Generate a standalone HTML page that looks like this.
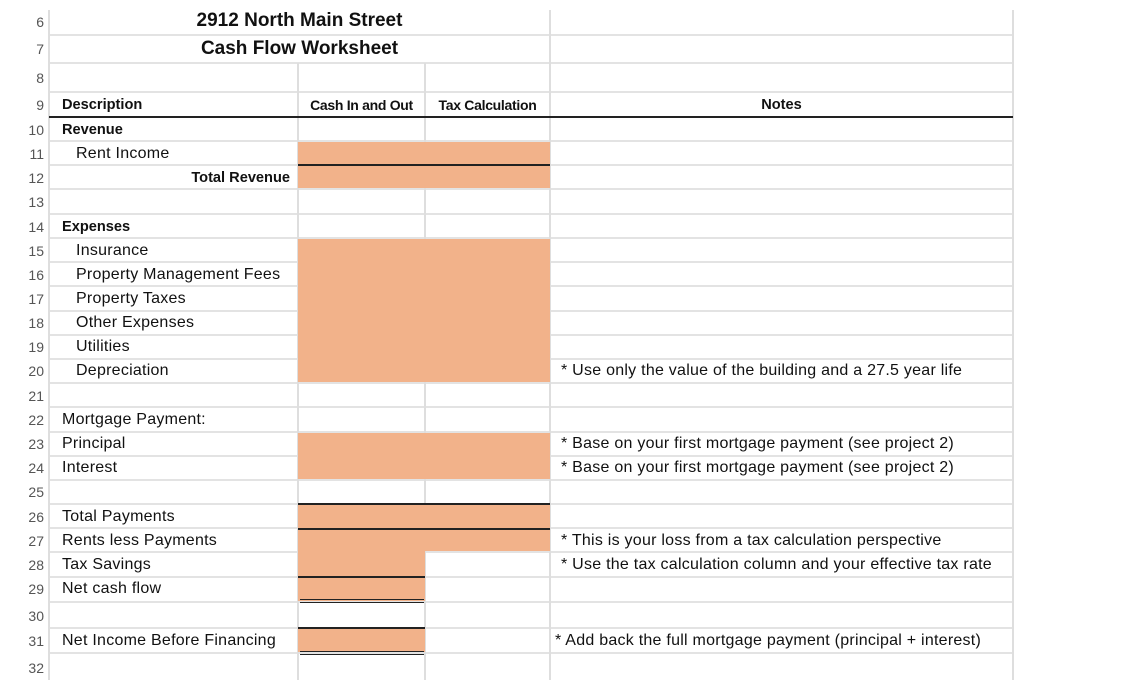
<!DOCTYPE html>
<html><head><meta charset="utf-8"><style>
body{margin:0;width:1147px;height:697px;background:#fff;position:relative;overflow:hidden;font-family:"Liberation Sans",sans-serif;color:#111}
div{position:absolute;box-sizing:border-box}
.h{left:49px;width:964px;height:2px;background:#e3e3e3}
.v{width:2px;background:#dedede}
.o{background:#f2b28a}
.k{background:#222;height:1.5px}
.n{left:0;width:44px;text-align:right;font-size:14px;color:#555;line-height:24px}
.t{font-size:16px;letter-spacing:0.25px;line-height:24px;white-space:nowrap}
.b{font-weight:bold;font-size:14.6px;letter-spacing:0}
</style></head><body>
<div class="o" style="left:298px;top:141px;width:252px;height:48px"></div>
<div class="o" style="left:298px;top:238px;width:252px;height:145px"></div>
<div class="o" style="left:298px;top:432px;width:252px;height:48px"></div>
<div class="o" style="left:298px;top:504px;width:252px;height:48px"></div>
<div class="o" style="left:298px;top:552px;width:127px;height:49px"></div>
<div class="o" style="left:298px;top:628px;width:127px;height:25px"></div>
<div class="h" style="top:34px"></div><div class="h" style="top:62px"></div><div class="h" style="top:91px"></div>
<div class="h" style="top:140px"></div><div class="h" style="top:164px"></div><div class="h" style="top:188px"></div>
<div class="h" style="top:213px"></div><div class="h" style="top:237px"></div><div class="h" style="top:261px"></div>
<div class="h" style="top:285px"></div><div class="h" style="top:310px"></div><div class="h" style="top:334px"></div>
<div class="h" style="top:358px"></div><div class="h" style="top:382px"></div><div class="h" style="top:406px"></div>
<div class="h" style="top:431px"></div><div class="h" style="top:455px"></div><div class="h" style="top:479px"></div>
<div class="h" style="top:503px"></div><div class="h" style="top:527px"></div><div class="h" style="top:551px"></div>
<div class="h" style="top:576px"></div><div class="h" style="top:601px"></div><div class="h" style="top:627px"></div>
<div class="h" style="top:652px"></div>
<div class="v" style="left:48px;top:10px;height:670px"></div>
<div class="v" style="left:297px;top:63px;height:617px"></div>
<div class="v" style="left:424px;top:63px;height:617px"></div>
<div class="v" style="left:549px;top:10px;height:670px"></div>
<div class="v" style="left:1012px;top:10px;height:670px"></div>
<div class="o" style="left:298px;top:142px;width:252px;height:22px"></div>
<div class="o" style="left:298px;top:166px;width:252px;height:22px"></div>
<div class="o" style="left:298px;top:239px;width:252px;height:143px"></div>
<div class="o" style="left:298px;top:433px;width:252px;height:46px"></div>
<div class="o" style="left:298px;top:505px;width:252px;height:46px"></div>
<div class="o" style="left:298px;top:551px;width:127px;height:50px"></div>
<div class="o" style="left:298px;top:629px;width:127px;height:23px"></div>
<div class="k" style="left:49px;top:116px;width:964px"></div>
<div class="k" style="left:298px;top:164px;width:252px"></div>
<div class="k" style="left:298px;top:503px;width:252px"></div>
<div class="k" style="left:298px;top:528px;width:252px"></div>
<div class="k" style="left:298px;top:576px;width:127px"></div>
<div class="k" style="left:300px;top:599px;width:124px;height:1px"></div>
<div class="k" style="left:300px;top:602px;width:124px;height:1px"></div>
<div class="k" style="left:298px;top:627px;width:127px"></div>
<div class="k" style="left:300px;top:651px;width:124px;height:1px"></div>
<div class="k" style="left:300px;top:654px;width:124px;height:1px"></div>
<div class="n" style="top:10px">6</div><div class="n" style="top:37px">7</div><div class="n" style="top:66px">8</div>
<div class="n" style="top:93px">9</div><div class="n" style="top:118px">10</div><div class="n" style="top:142px">11</div>
<div class="n" style="top:166px">12</div><div class="n" style="top:190px">13</div><div class="n" style="top:215px">14</div>
<div class="n" style="top:239px">15</div><div class="n" style="top:263px">16</div><div class="n" style="top:287px">17</div>
<div class="n" style="top:311px">18</div><div class="n" style="top:335px">19</div><div class="n" style="top:359px">20</div>
<div class="n" style="top:384px">21</div><div class="n" style="top:408px">22</div><div class="n" style="top:432px">23</div>
<div class="n" style="top:456px">24</div><div class="n" style="top:480px">25</div><div class="n" style="top:505px">26</div>
<div class="n" style="top:529px">27</div><div class="n" style="top:553px">28</div><div class="n" style="top:577px">29</div>
<div class="n" style="top:604px">30</div><div class="n" style="top:629px">31</div><div class="n" style="top:656px">32</div>
<div class="t" style="left:49px;width:501px;text-align:center;top:9px;font-weight:bold;font-size:19px;letter-spacing:0">2912 North Main Street</div>
<div class="t" style="left:49px;width:501px;text-align:center;top:37px;font-weight:bold;font-size:19px;letter-spacing:0">Cash Flow Worksheet</div>
<div class="t b" style="left:62px;top:93px">Description</div>
<div class="t b" style="left:298px;width:127px;text-align:center;top:93px;font-size:14px;letter-spacing:-0.3px">Cash In and Out</div>
<div class="t b" style="left:425px;width:125px;text-align:center;top:93px;font-size:14px;letter-spacing:-0.3px">Tax Calculation</div>
<div class="t b" style="left:550px;width:463px;text-align:center;top:93px">Notes</div>
<div class="t b" style="left:62px;top:118px">Revenue</div>
<div class="t" style="left:76px;top:142px">Rent Income</div>
<div class="t b" style="left:49px;width:241px;text-align:right;top:166px">Total Revenue</div>
<div class="t b" style="left:62px;top:215px">Expenses</div>
<div class="t" style="left:76px;top:239px">Insurance</div>
<div class="t" style="left:76px;top:263px">Property Management Fees</div>
<div class="t" style="left:76px;top:287px">Property Taxes</div>
<div class="t" style="left:76px;top:311px">Other Expenses</div>
<div class="t" style="left:76px;top:335px">Utilities</div>
<div class="t" style="left:76px;top:359px">Depreciation</div>
<div class="t" style="left:62px;top:408px">Mortgage Payment:</div>
<div class="t" style="left:62px;top:432px">Principal</div>
<div class="t" style="left:62px;top:456px">Interest</div>
<div class="t" style="left:62px;top:505px">Total Payments</div>
<div class="t" style="left:62px;top:529px">Rents less Payments</div>
<div class="t" style="left:62px;top:553px">Tax Savings</div>
<div class="t" style="left:62px;top:577px">Net cash flow</div>
<div class="t" style="left:62px;top:629px">Net Income Before Financing</div>
<div class="t" style="left:561px;top:359px">* Use only the value of the building and a 27.5 year life</div>
<div class="t" style="left:561px;top:432px">* Base on your first mortgage payment (see project 2)</div>
<div class="t" style="left:561px;top:456px">* Base on your first mortgage payment (see project 2)</div>
<div class="t" style="left:561px;top:529px">* This is your loss from a tax calculation perspective</div>
<div class="t" style="left:561px;top:553px">* Use the tax calculation column and your effective tax rate</div>
<div class="t" style="left:555px;top:629px">* Add back the full mortgage payment (principal + interest)</div>
</body></html>
